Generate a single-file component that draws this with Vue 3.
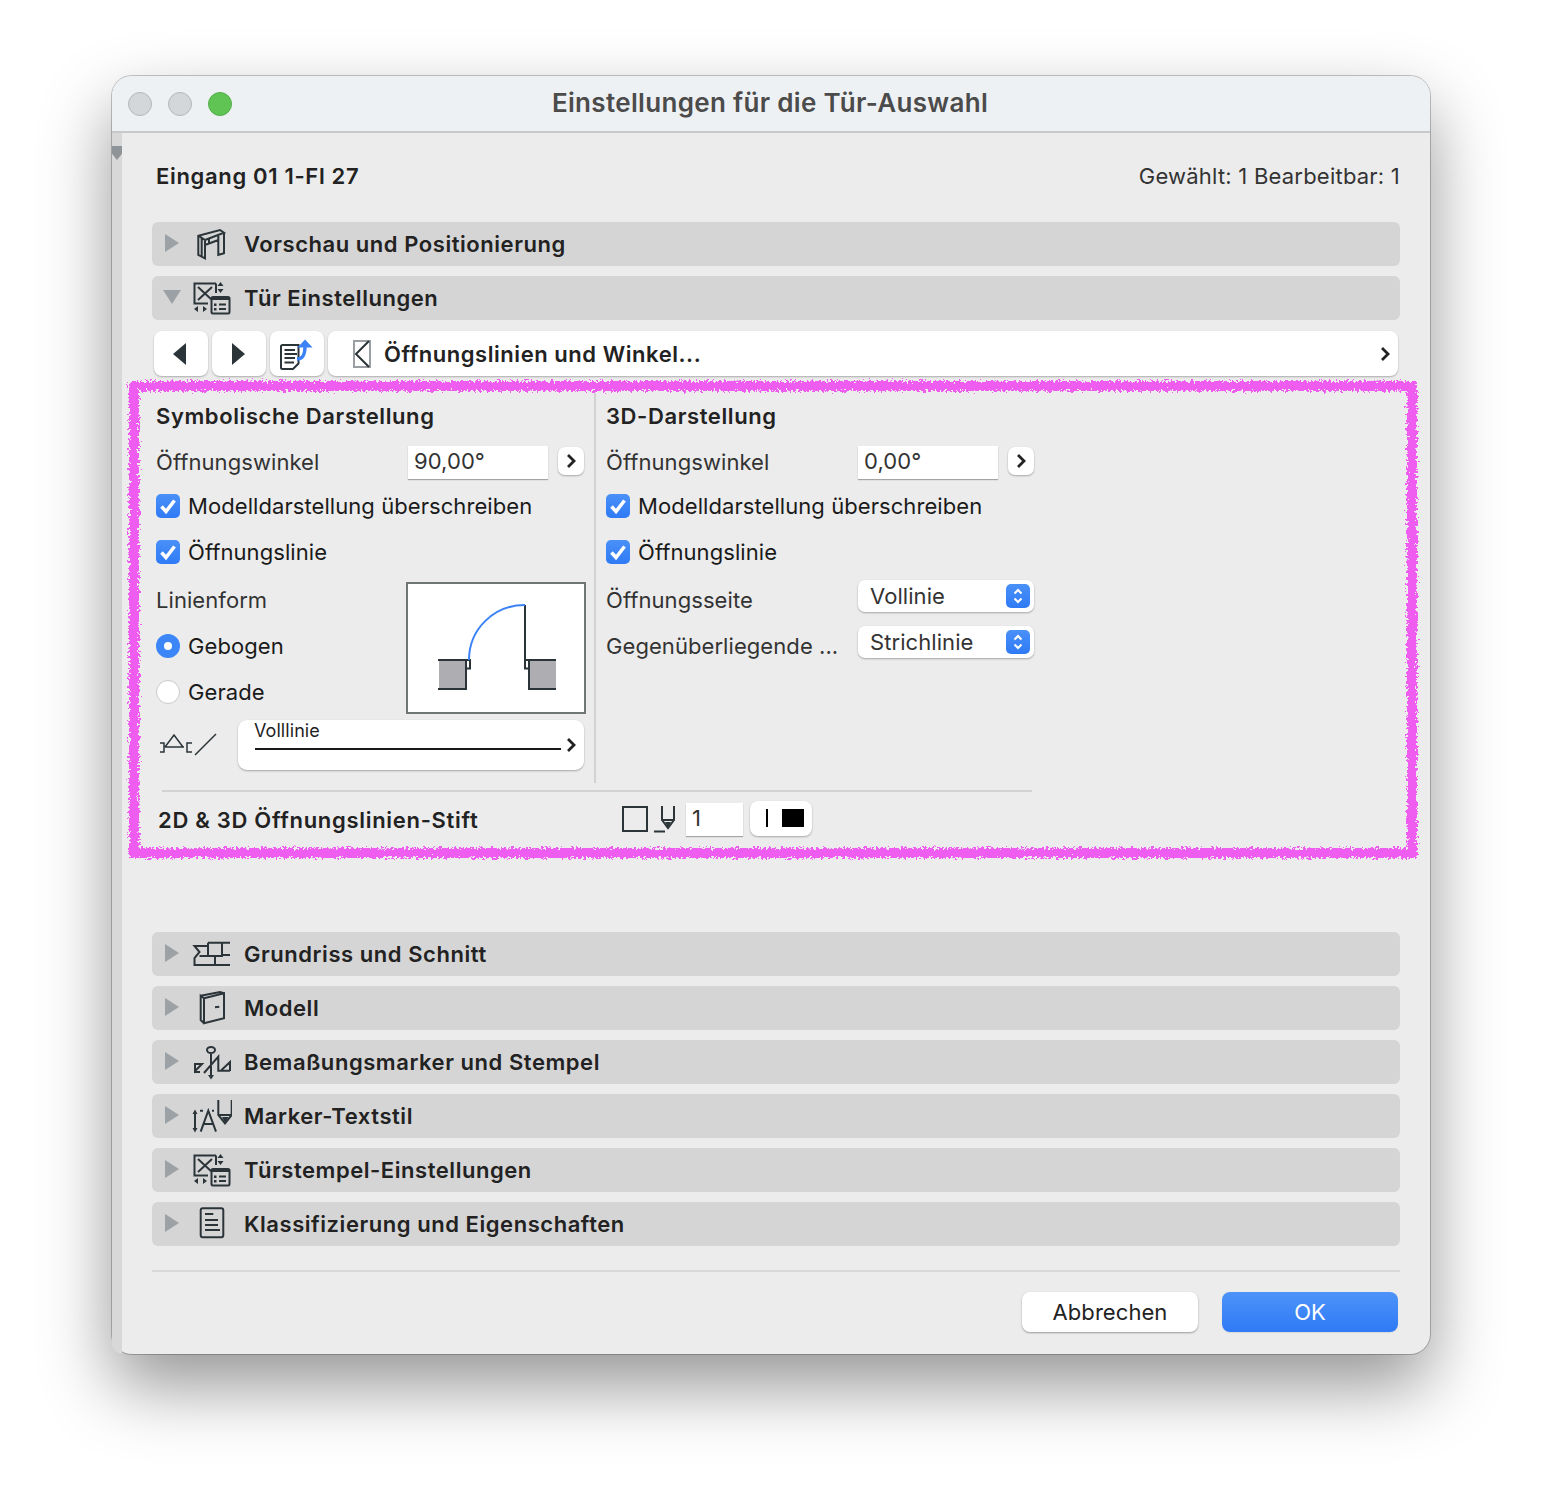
<template>
  <div class="page">
    <div class="window">
      <header class="titlebar">
        <div class="lights">
          <span class="light"></span>
          <span class="light"></span>
          <span class="light green"></span>
        </div>
        <div class="title">Einstellungen für die Tür-Auswahl</div>
      </header>

      <div class="body">
        <div class="strip"><span class="strip-mark"></span></div>

        <main class="main">
          <div class="head">
            <strong>Eingang 01 1-Fl 27</strong>
            <span>Gewählt: 1 Bearbeitbar: 1</span>
          </div>

          <div class="bars">
            <div v-for="s in topBars" :key="s.label" class="bar">
              <span :class="['tri', { open: s.open }]"></span>
              <svg class="bar-icon" viewBox="0 0 40 40">
                <path class="ln" :d="icons[s.icon].line" />
                <path class="so" :d="icons[s.icon].solid" />
              </svg>
              <span>{{ s.label }}</span>
            </div>
          </div>

          <div class="toolbar">
            <button class="tool"><span class="arrow-left"></span></button>
            <button class="tool"><span class="arrow-right"></span></button>
            <button class="tool">
              <svg width="40" height="36" viewBox="0 0 40 36">
                <path class="ln" d="M5.5 9H21.5V27.5L16 33H5.5A1.5 1.5 0 0 1 4 31.5V10.5A1.5 1.5 0 0 1 5.5 9Z" />
                <path class="ln" d="M7.5 14H18M7.5 18H20M7.5 22H18M7.5 26.5H17" />
                <path class="blue-ln" d="M20 23C26 23 28 19 28 10" />
                <path class="blue-so" d="M20.5 11.5L28 3.5L35.5 11.5Z" />
              </svg>
            </button>
            <button class="tool wide">
              <svg class="open-icon" width="18" height="28" viewBox="0 0 18 28">
                <rect x="1" y="1" width="16" height="26" fill="none" stroke="#9a9fa3" stroke-width="2" />
                <path class="ln" d="M16 1L3 14L16 27" />
              </svg>
              <span class="wide-label">Öffnungslinien und Winkel...</span>
              <svg class="chev" width="12" height="16" viewBox="0 0 12 16"><path d="M3 2L9 8L3 14" /></svg>
            </button>
          </div>

          <section class="panel">
            <div class="columns">
              <div class="col col-left">
                <div class="row heading">Symbolische Darstellung</div>
                <div class="row field">
                  <span class="label">Öffnungswinkel</span>
                  <span class="input">90,00°</span>
                  <button class="mini"><svg class="chev" width="12" height="16" viewBox="0 0 12 16"><path d="M3 2L9 8L3 14" /></svg></button>
                </div>
                <label class="row check tight"><span class="box"><svg width="24" height="24" viewBox="0 0 24 24"><path d="M5.5 12.5L10 17.5L18.5 6.5" /></svg></span>Modelldarstellung überschreiben</label>
                <label class="row check"><span class="box"><svg width="24" height="24" viewBox="0 0 24 24"><path d="M5.5 12.5L10 17.5L18.5 6.5" /></svg></span>Öffnungslinie</label>

                <div class="shape">
                  <div class="shape-opts">
                    <div class="row label">Linienform</div>
                    <label class="row check"><span class="radio on"></span>Gebogen</label>
                    <label class="row check"><span class="radio"></span>Gerade</label>
                  </div>
                  <div class="preview">
                    <svg width="176" height="128" viewBox="0 0 176 128">
                      <path fill="#aeadb1" stroke="none" d="M31 76H58V105H31ZM121 76H148V105H121Z" />
                      <path class="ln" d="M30 76H62V84.5H58M58 76V105H30M148 76H117V84.5H121M121 76V105H148M117 76V21" />
                      <path class="arc" d="M61 76C61 45 86 21 117 21" />
                    </svg>
                  </div>
                </div>

                <div class="line-row">
                  <svg width="60" height="28" viewBox="0 0 60 28">
                    <path class="ln thin" d="M7 19H26M7 19L16 7L25 19M2 15H6V24H2M34 15H29V24H34M37 27L58 6" />
                  </svg>
                  <button class="line-select">
                    <span class="line-name">Volllinie</span>
                    <span class="line-sample"></span>
                    <svg class="chev line-chev" width="12" height="16" viewBox="0 0 12 16"><path d="M3 2L9 8L3 14" /></svg>
                  </button>
                </div>
              </div>

              <div class="col col-right">
                <div class="row heading">3D-Darstellung</div>
                <div class="row field">
                  <span class="label">Öffnungswinkel</span>
                  <span class="input">0,00°</span>
                  <button class="mini"><svg class="chev" width="12" height="16" viewBox="0 0 12 16"><path d="M3 2L9 8L3 14" /></svg></button>
                </div>
                <label class="row check tight"><span class="box"><svg width="24" height="24" viewBox="0 0 24 24"><path d="M5.5 12.5L10 17.5L18.5 6.5" /></svg></span>Modelldarstellung überschreiben</label>
                <label class="row check"><span class="box"><svg width="24" height="24" viewBox="0 0 24 24"><path d="M5.5 12.5L10 17.5L18.5 6.5" /></svg></span>Öffnungslinie</label>
                <div v-for="p in popups" :key="p.label" class="row field popup-row">
                  <span class="label">{{ p.label }}</span>
                  <button class="popup">
                    <span>{{ p.value }}</span>
                    <span class="stepper">
                      <svg width="24" height="24" viewBox="0 0 24 24"><path d="M8.5 9.5L12 6L15.5 9.5M8.5 14.5L12 18L15.5 14.5" /></svg>
                    </span>
                  </button>
                </div>
              </div>
            </div>

            <div class="pen-row">
              <strong class="pen-label">2D &amp; 3D Öffnungslinien-Stift</strong>
              <span class="pen-square"></span>
              <svg class="pen-icon" width="24" height="30" viewBox="0 0 24 30">
                <path class="ln" d="M9 2V16L15 24L21 16V2M9 16H21M1 27.5H12" />
                <path class="so" d="M12 18H18L15 24Z" />
              </svg>
              <span class="input pen-input">1</span>
              <button class="pen-btn"><span class="pen-bar"></span><span class="pen-swatch"></span></button>
            </div>

            <div class="scribble"></div>
          </section>

          <div class="bars lower">
            <div v-for="s in lowerBars" :key="s.label" class="bar">
              <span class="tri"></span>
              <svg class="bar-icon" viewBox="0 0 40 40">
                <path class="ln" :d="icons[s.icon].line" />
                <path class="so" :d="icons[s.icon].solid" />
              </svg>
              <span>{{ s.label }}</span>
            </div>
          </div>

          <footer class="foot">
            <button class="btn">Abbrechen</button>
            <button class="btn primary">OK</button>
          </footer>
        </main>
      </div>
    </div>

    <svg class="defs" width="0" height="0">
      <filter id="rough" x="-2%" y="-2%" width="104%" height="104%">
        <feTurbulence type="fractalNoise" baseFrequency="0.4" numOctaves="3" seed="4" />
        <feDisplacementMap in="SourceGraphic" scale="9" />
      </filter>
    </svg>
  </div>
</template>

<script setup>
const settings = {
  line: 'M24 5.5H2.5V25.5H16M24 5.5V15M6 9L20 22M20 9L6 22M21 19H36A1.5 1.5 0 0 1 37.5 20.5V34A1.5 1.5 0 0 1 36 35.5H21A1.5 1.5 0 0 1 19.5 34V20.5A1.5 1.5 0 0 1 21 19ZM27 26.5H34M27 31H34',
  solid: 'M19.5 19H37.5V22H19.5ZM22 25.5H24.5V28H22ZM22 30H24.5V32.5H22ZM28.5 4L31.5 8H25.5ZM28.5 15L31.5 11H25.5ZM2 31L6 28V34ZM15 31L11 28V34Z'
}

const icons = {
  settings,
  preview: {
    line: 'M13 16V34.3L6.3 31V11.7L28 6L32 8.7L13 16M6.3 11.7L13 16M9.7 13.5V32.5M13 21L26.3 16V31L32 29.3V8.7M26.3 12V16M17 15V19.5',
    solid: ''
  },
  plan: {
    line: 'M16 12H2.5L7.5 18L2.5 24V31H38M16 8.7H38M16 8.7V22H30V8.7M30 21H38M23 22V31M16 22H7.5',
    solid: ''
  },
  model: {
    line: 'M12 10.3L32 5.3V30.3L12 35.3ZM12 10.3L8.7 7.7V32L12 35.3M8.7 7.7L28 4L32 5.3M23 19.3L27.3 18.7',
    solid: ''
  },
  dim: {
    line: 'M15 8A4 3 0 1 0 23 8A4 3 0 1 0 15 8ZM19 11V34M12 31L26.3 14.7V28.7H38M3 22H10L3 29ZM3 22V30H8M29.5 28L38 20V29',
    solid: 'M16 33H22L19 37.5Z'
  },
  marker: {
    line: 'M3 16V34M8 14.7H11M20 14.7H22M8.7 35.7L16.3 14.7L24 35.7M12 28H21M26.3 4V19L33 27.3L39.7 19V4M26.3 19H39.7',
    solid: 'M0.5 18H5.5L3 13.5ZM0.5 32H5.5L3 36.5ZM30 21H36.5L33 27.3Z'
  },
  classify: {
    line: 'M10.7 4.3H29.3A2 2 0 0 1 31.3 6.3V31.3A2 2 0 0 1 29.3 33.3H10.7A2 2 0 0 1 8.7 31.3V6.3A2 2 0 0 1 10.7 4.3ZM13 10H21.3M13 16H26M13 21H26M13 26H28',
    solid: ''
  }
}

const topBars = [
  { label: 'Vorschau und Positionierung', icon: 'preview' },
  { label: 'Tür Einstellungen', icon: 'settings', open: true }
]

const lowerBars = [
  { label: 'Grundriss und Schnitt', icon: 'plan' },
  { label: 'Modell', icon: 'model' },
  { label: 'Bemaßungsmarker und Stempel', icon: 'dim' },
  { label: 'Marker-Textstil', icon: 'marker' },
  { label: 'Türstempel-Einstellungen', icon: 'settings' },
  { label: 'Klassifizierung und Eigenschaften', icon: 'classify' }
]

const popups = [
  { label: 'Öffnungsseite', value: 'Vollinie' },
  { label: 'Gegenüberliegende ...', value: 'Strichlinie' }
]
</script>

<style>
body {
  margin: 0;
  background: #fff;
}
</style>

<style scoped>
.page {
  position: relative;
  width: 1542px;
  height: 1502px;
  padding: 76px 0 0 112px;
  box-sizing: border-box;
  overflow: hidden;
  background: #fff;
  font-family: Inter, "Noto Sans", sans-serif;
  font-size: 22px;
  letter-spacing: 0.07px;
  color: #1f1f1f;
}

.defs {
  position: absolute;
}

button {
  border: none;
  padding: 0;
  font: inherit;
  letter-spacing: inherit;
  color: inherit;
  background: #fff;
}

.ln,
.arc,
.blue-ln {
  fill: none;
  stroke: #2b3439;
  stroke-width: 2;
}

.ln.thin {
  stroke-width: 1.5;
}

.so {
  fill: #2b3439;
}

.arc,
.blue-ln {
  stroke: #3b82f6;
}

.blue-ln {
  stroke-width: 3.5;
}

.blue-so {
  fill: #3b82f6;
}

.chev path {
  fill: none;
  stroke: #222;
  stroke-width: 2.8;
}

.window {
  width: 1318px;
  height: 1278px;
  box-sizing: border-box;
  display: flex;
  flex-direction: column;
  border-radius: 20px;
  background: #ececec;
  box-shadow: 0 0 0 1px rgba(0, 0, 0, 0.22), 0 32px 70px rgba(0, 0, 0, 0.42);
}

.titlebar {
  position: relative;
  height: 57px;
  flex: none;
  box-sizing: border-box;
  display: flex;
  align-items: center;
  padding-left: 16px;
  background: #eef1f4;
  border-radius: 20px 20px 0 0;
  border-bottom: 2px solid #c9c9c9;
}

.lights {
  display: flex;
  gap: 16px;
}

.light {
  width: 24px;
  height: 24px;
  box-sizing: border-box;
  border-radius: 50%;
  background: #d3d7da;
  border: 1px solid #b5b8bb;
}

.light.green {
  background: #60c454;
  border-color: #53b048;
}

.title {
  position: absolute;
  left: 0;
  right: 2px;
  top: 11px;
  text-align: center;
  font-size: 26px;
  letter-spacing: 0.33px;
  font-weight: 600;
  color: #4b4b4b;
}

.body {
  flex: 1;
  display: flex;
  min-height: 0;
}

.strip {
  width: 10px;
  flex: none;
  background: #d8d8d8;
  border-radius: 0 0 0 20px;
}

.strip-mark {
  display: block;
  width: 10px;
  height: 14px;
  margin-top: 13px;
  background: #8e9498;
  clip-path: polygon(0 0, 100% 0, 100% 55%, 50% 100%, 0 55%);
}

.main {
  flex: 1;
  padding: 0 30px;
  min-width: 0;
}

.head {
  height: 89px;
  box-sizing: border-box;
  padding: 30px 0 0 4px;
  display: flex;
  justify-content: space-between;
  color: #333;
  letter-spacing: 0.22px;
}

.head strong {
  font-weight: 600;
  color: #222;
  letter-spacing: 0.67px;
}

.bars {
  display: flex;
  flex-direction: column;
  gap: 10px;
}

.bar {
  height: 44px;
  display: flex;
  align-items: center;
  border-radius: 6px;
  background: #d5d5d5;
  font-weight: 600;
  color: #222;
  letter-spacing: 0.55px;
}

.tri {
  width: 0;
  height: 0;
  margin: 0 13px 2px 13px;
  border-left: 14px solid #9ba1a5;
  border-top: 9px solid transparent;
  border-bottom: 9px solid transparent;
}

.tri.open {
  margin: 0 11px 2px 11px;
  border-left: 9px solid transparent;
  border-right: 9px solid transparent;
  border-top: 14px solid #9ba1a5;
  border-bottom: 0;
}

.bar-icon {
  width: 40px;
  height: 40px;
  margin-right: 12px;
  flex: none;
}

.toolbar {
  display: flex;
  gap: 4px;
  height: 45px;
  margin-top: 11px;
  padding: 0 2px;
}

.tool {
  width: 54px;
  height: 45px;
  display: flex;
  align-items: center;
  justify-content: center;
  border-radius: 8px;
  box-shadow: 0 1px 2px rgba(0, 0, 0, 0.28);
}

.tool.wide {
  flex: 1;
  justify-content: flex-start;
  padding: 0 7px 0 25px;
}

.wide-label {
  flex: 1;
  margin-left: 13px;
  text-align: left;
  font-weight: 600;
  letter-spacing: 0.55px;
  color: #222;
}

.arrow-left,
.arrow-right {
  width: 0;
  height: 0;
  border-top: 11px solid transparent;
  border-bottom: 11px solid transparent;
}

.arrow-left {
  border-right: 13px solid #2b3439;
  margin-right: 4px;
}

.arrow-right {
  border-left: 13px solid #2b3439;
  margin-right: 2px;
}

.panel {
  position: relative;
  height: 477px;
  margin: 5px 0 74px;
  padding-top: 12px;
  box-sizing: border-box;
}

.scribble {
  position: absolute;
  left: -23px;
  top: 0;
  width: 1288px;
  height: 477px;
  box-sizing: border-box;
  border: 10px solid #ee5cf0;
  pointer-events: none;
  filter: url(#rough);
}

.columns {
  display: flex;
  height: 390px;
}

.col-left {
  width: 444px;
  box-sizing: border-box;
  padding: 0 8px 0 4px;
  border-right: 2px solid #d2d2d2;
}

.col-right {
  padding-left: 10px;
  width: 430px;
}

.row {
  height: 46px;
  display: flex;
  align-items: center;
}

.heading {
  height: 46px;
  font-weight: 600;
  letter-spacing: 0.6px;
  color: #222;
}

.field {
  height: 46px;
  margin-bottom: -2px;
  position: relative;
}

.label {
  color: #333;
}

.input {
  display: block;
  box-sizing: border-box;
  height: 33px;
  line-height: 31px;
  background: #fff;
  padding-left: 6px;
  box-shadow: 0 1px 1px rgba(0, 0, 0, 0.3);
  color: #333;
}

.field .label {
  width: 252px;
  flex: none;
}

.field .input {
  width: 140px;
  margin-top: 1px;
}

.mini {
  width: 26px;
  height: 28px;
  margin: -2px 0 0 10px;
  display: flex;
  align-items: center;
  justify-content: center;
  border-radius: 7px;
  box-shadow: 0 1px 2px rgba(0, 0, 0, 0.3);
}

.check {
  gap: 8px;
  color: #1a1a1a;
}

.check.tight {
  height: 45px;
  margin-bottom: 1px;
}

.box,
.radio {
  width: 24px;
  height: 24px;
  flex: none;
  box-sizing: border-box;
}

.box {
  border-radius: 5px;
  background: linear-gradient(#4a90f8, #2f7bf6);
}

.box svg {
  display: block;
}

.box path {
  fill: none;
  stroke: #fff;
  stroke-width: 3.5;
}

.radio {
  border-radius: 50%;
  background: #fff;
  border: 1px solid #c9c9c9;
}

.radio.on {
  border: 8px solid #3d86f7;
}

.shape {
  display: flex;
  justify-content: space-between;
  height: 134px;
  margin-top: 2px;
}

.shape-opts .label {
  height: 46px;
  box-sizing: border-box;
}

.preview {
  width: 180px;
  height: 132px;
  margin-top: 5px;
  box-sizing: border-box;
  border: 2px solid #707575;
  background: #fff;
}

.preview svg {
  display: block;
}

.line-row {
  display: flex;
  align-items: flex-start;
  margin-top: 9px;
}

.line-row > svg {
  margin: 8px 20px 0 2px;
  flex: none;
}

.line-select {
  position: relative;
  flex: 1;
  height: 50px;
  margin-right: 2px;
  display: block;
  border-radius: 9px;
  box-shadow: 0 1px 2px rgba(0, 0, 0, 0.3);
  text-align: left;
}

.line-name {
  position: absolute;
  left: 16px;
  top: 0;
  font-size: 18px;
  line-height: 22px;
}

.line-sample {
  position: absolute;
  left: 17px;
  top: 28px;
  width: 306px;
  height: 2px;
  background: #1a1a1a;
}

.line-chev {
  position: absolute;
  right: 7px;
  top: 17px;
}

.popup-row {
  height: 46px;
  margin-bottom: 0;
  align-items: flex-start;
  padding-top: 5px;
  box-sizing: border-box;
}

.popup-row .label {
  padding-top: 7px;
}

.popup {
  width: 176px;
  height: 32px;
  display: flex;
  align-items: center;
  justify-content: space-between;
  padding: 0 4px 0 12px;
  box-sizing: border-box;
  border-radius: 7px;
  box-shadow: 0 1px 2px rgba(0, 0, 0, 0.3);
  color: #333;
}

.stepper {
  width: 24px;
  height: 24px;
  border-radius: 5px;
  background: linear-gradient(#4a90f8, #2f7bf6);
}

.stepper svg {
  display: block;
}

.stepper path {
  fill: none;
  stroke: #fff;
  stroke-width: 2;
}

.pen-row {
  display: flex;
  align-items: center;
  width: 870px;
  height: 58px;
  margin: 7px 0 0 10px;
  box-sizing: border-box;
  border-top: 2px solid #d2d2d2;
}

.pen-label {
  width: 464px;
  flex: none;
  margin-left: -4px;
  font-weight: 600;
  letter-spacing: 0.7px;
  color: #222;
}

.pen-square {
  width: 26px;
  height: 26px;
  box-sizing: border-box;
  border: 2px solid #2b3439;
  margin: -2px 5px 0 0;
}

.pen-icon {
  margin-top: -2px;
}

.pen-input {
  width: 57px;
  margin: -2px 7px 0 9px;
}

.pen-btn {
  width: 62px;
  height: 35px;
  margin-top: -4px;
  display: flex;
  align-items: center;
  justify-content: flex-start;
  padding-left: 16px;
  box-sizing: border-box;
  gap: 14px;
  border-radius: 8px;
  box-shadow: 0 1px 2px rgba(0, 0, 0, 0.3);
}

.pen-bar {
  width: 2px;
  height: 18px;
  background: #000;
}

.pen-swatch {
  width: 22px;
  height: 18px;
  background: #000;
}

.foot {
  display: flex;
  justify-content: flex-end;
  gap: 24px;
  margin-top: 24px;
  padding: 20px 2px 0 0;
  border-top: 2px solid #d8d8d8;
}

.btn {
  width: 176px;
  height: 40px;
  border-radius: 8px;
  box-shadow: 0 1px 2px rgba(0, 0, 0, 0.35);
  color: #222;
}

.btn.primary {
  color: #fff;
  background: linear-gradient(#4d93f8, #2f7af6);
  box-shadow: 0 1px 1px rgba(0, 0, 0, 0.08);
}
</style>
